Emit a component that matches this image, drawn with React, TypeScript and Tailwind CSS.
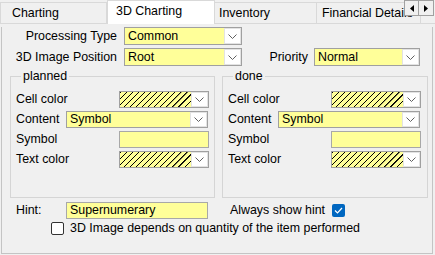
import React from 'react';

const hatch =
  'bg-[repeating-linear-gradient(135deg,#000_0px,#000_0.7px,#ffff99_0.9px,#ffff99_4.3px)]';

function Chevron() {
  return (
    <svg width="9" height="5" viewBox="0 0 9 5">
      <path d="M0.5 0.5 L4.5 4.5 L8.5 0.5" fill="none" stroke="#606060" strokeWidth="1" />
    </svg>
  );
}

function Combo({ className, text, hatched }: { className: string; text?: string; hatched?: boolean }) {
  return (
    <div className={`flex border border-[#a0a0a0] bg-[#ffff99] ${className}`}>
      {hatched ? (
        <div className={`flex-1 ${hatch}`} />
      ) : (
        <div className="flex-1 flex items-center pl-[3px] leading-none">{text}</div>
      )}
      <div className="w-[17px] bg-white border border-[#e3e3e3] flex items-center justify-center">
        <Chevron />
      </div>
    </div>
  );
}

function Edit({ className, text }: { className: string; text?: string }) {
  return (
    <div className={`flex items-center border border-[#a8a8a8] bg-[#ffff99] pl-[3px] leading-none ${className}`}>
      {text}
    </div>
  );
}

function Group({ title, className }: { title: string; className: string }) {
  return (
    <div className={`relative h-[122px] border border-[#d5d5d5] pt-[14px] pl-[5px] ${className}`}>
      <span className="absolute left-[10px] -top-[8px] px-[2px] bg-[#f0f0f0] leading-[14px]">{title}</span>
      <div className="flex flex-col gap-[3px]">
        <div className="flex items-center h-[17px]">
          <div className="w-[103px]">Cell color</div>
          <Combo className="w-[90px] h-[17px]" hatched />
        </div>
        <div className="flex items-center h-[17px]">
          <div className="w-[50px]">Content</div>
          <Combo className="w-[142px] h-[17px]" text="Symbol" />
        </div>
        <div className="flex items-center h-[17px]">
          <div className="w-[103px]">Symbol</div>
          <Edit className="w-[90px] h-[17px]" />
        </div>
        <div className="flex items-center h-[17px]">
          <div className="w-[103px]">Text color</div>
          <Combo className="w-[90px] h-[17px]" hatched />
        </div>
      </div>
    </div>
  );
}

export default function App() {
  return (
    <div className="w-[435px] h-[255px] bg-[#f0f0f0] relative overflow-hidden text-[12.4px] text-black font-['Liberation_Sans',Arial,sans-serif]">
      {/* tab strip */}
      <div className="flex items-end h-[24px]">
        <div className="w-[107px] h-[22px] border border-[#d9d9d9] pl-[11px] pt-[1px] flex items-center">Charting</div>
        <div className="w-[108px] h-[24px] border border-b-0 border-[#d9d9d9] bg-white pl-[8px] pb-[2px] flex items-center">
          3D Charting
        </div>
        <div className="w-[102px] h-[22px] border border-l-0 border-[#d9d9d9] pl-[4px] pt-[1px] flex items-center">Inventory</div>
        <div className="w-[104px] h-[22px] border border-l-0 border-[#d9d9d9] pl-[5px] pt-[1px] flex items-center whitespace-nowrap overflow-hidden">
          Financial Details
        </div>
        <div className="flex-1 h-[22px] border-b border-[#d9d9d9]" />
      </div>
      <div className="absolute top-0 left-[404px] flex">
        <div className="w-[15px] h-[16px] border border-[#a0a0a0] bg-[#f0f0f0] flex items-center justify-center">
          <svg width="4" height="7" viewBox="0 0 4 7">
            <path d="M4 0 L0 3.5 L4 7 Z" fill="#000" />
          </svg>
        </div>
        <div className="w-[15px] h-[16px] border border-l-0 border-[#a0a0a0] bg-[#f0f0f0] flex items-center justify-center">
          <svg width="4" height="7" viewBox="0 0 4 7">
            <path d="M0 0 L4 3.5 L0 7 Z" fill="#000" />
          </svg>
        </div>
      </div>

      {/* tab page */}
      <div className="ml-[1px] w-[432px] h-[227px] border-x border-b border-[#c4c4c4]">
        <div className="mt-[3px] flex items-center h-[18px]">
          <div className="w-[115px] text-right">Processing Type</div>
          <Combo className="ml-[7px] w-[118px] h-[18px]" text="Common" />
        </div>
        <div className="mt-[3px] flex items-center h-[18px]">
          <div className="w-[115px] text-right">3D Image Position</div>
          <Combo className="ml-[7px] w-[118px] h-[18px]" text="Root" />
          <div className="w-[66px] text-right">Priority</div>
          <Combo className="ml-[6px] w-[106px] h-[18px]" text="Normal" />
        </div>

        <div className="mt-[10px] flex">
          <Group title="planned" className="ml-[8px] w-[205px]" />
          <Group title="done" className="ml-[7px] w-[206px]" />
        </div>

        <div className="mt-[4px] flex items-center h-[17px]">
          <div className="ml-[14px] w-[50px]">Hint:</div>
          <Edit className="w-[142px] h-[17px]" text="Supernumerary" />
          <div className="ml-[22px] w-[102px]">Always show hint</div>
          <div className="w-[13px] h-[13px] rounded-[2px] bg-[#0067c0] flex items-center justify-center">
            <svg width="9" height="7" viewBox="0 0 9 7">
              <path d="M1 3.5 L3.5 6 L8 1" fill="none" stroke="#fff" strokeWidth="1.2" />
            </svg>
          </div>
        </div>
        <div className="mt-[3px] flex items-center h-[13px]">
          <div className="ml-[49px] w-[13px] h-[13px] rounded-[2px] border border-[#333] bg-white" />
          <div className="ml-[6px]">3D Image depends on quantity of the item performed</div>
        </div>
      </div>
    </div>
  );
}
